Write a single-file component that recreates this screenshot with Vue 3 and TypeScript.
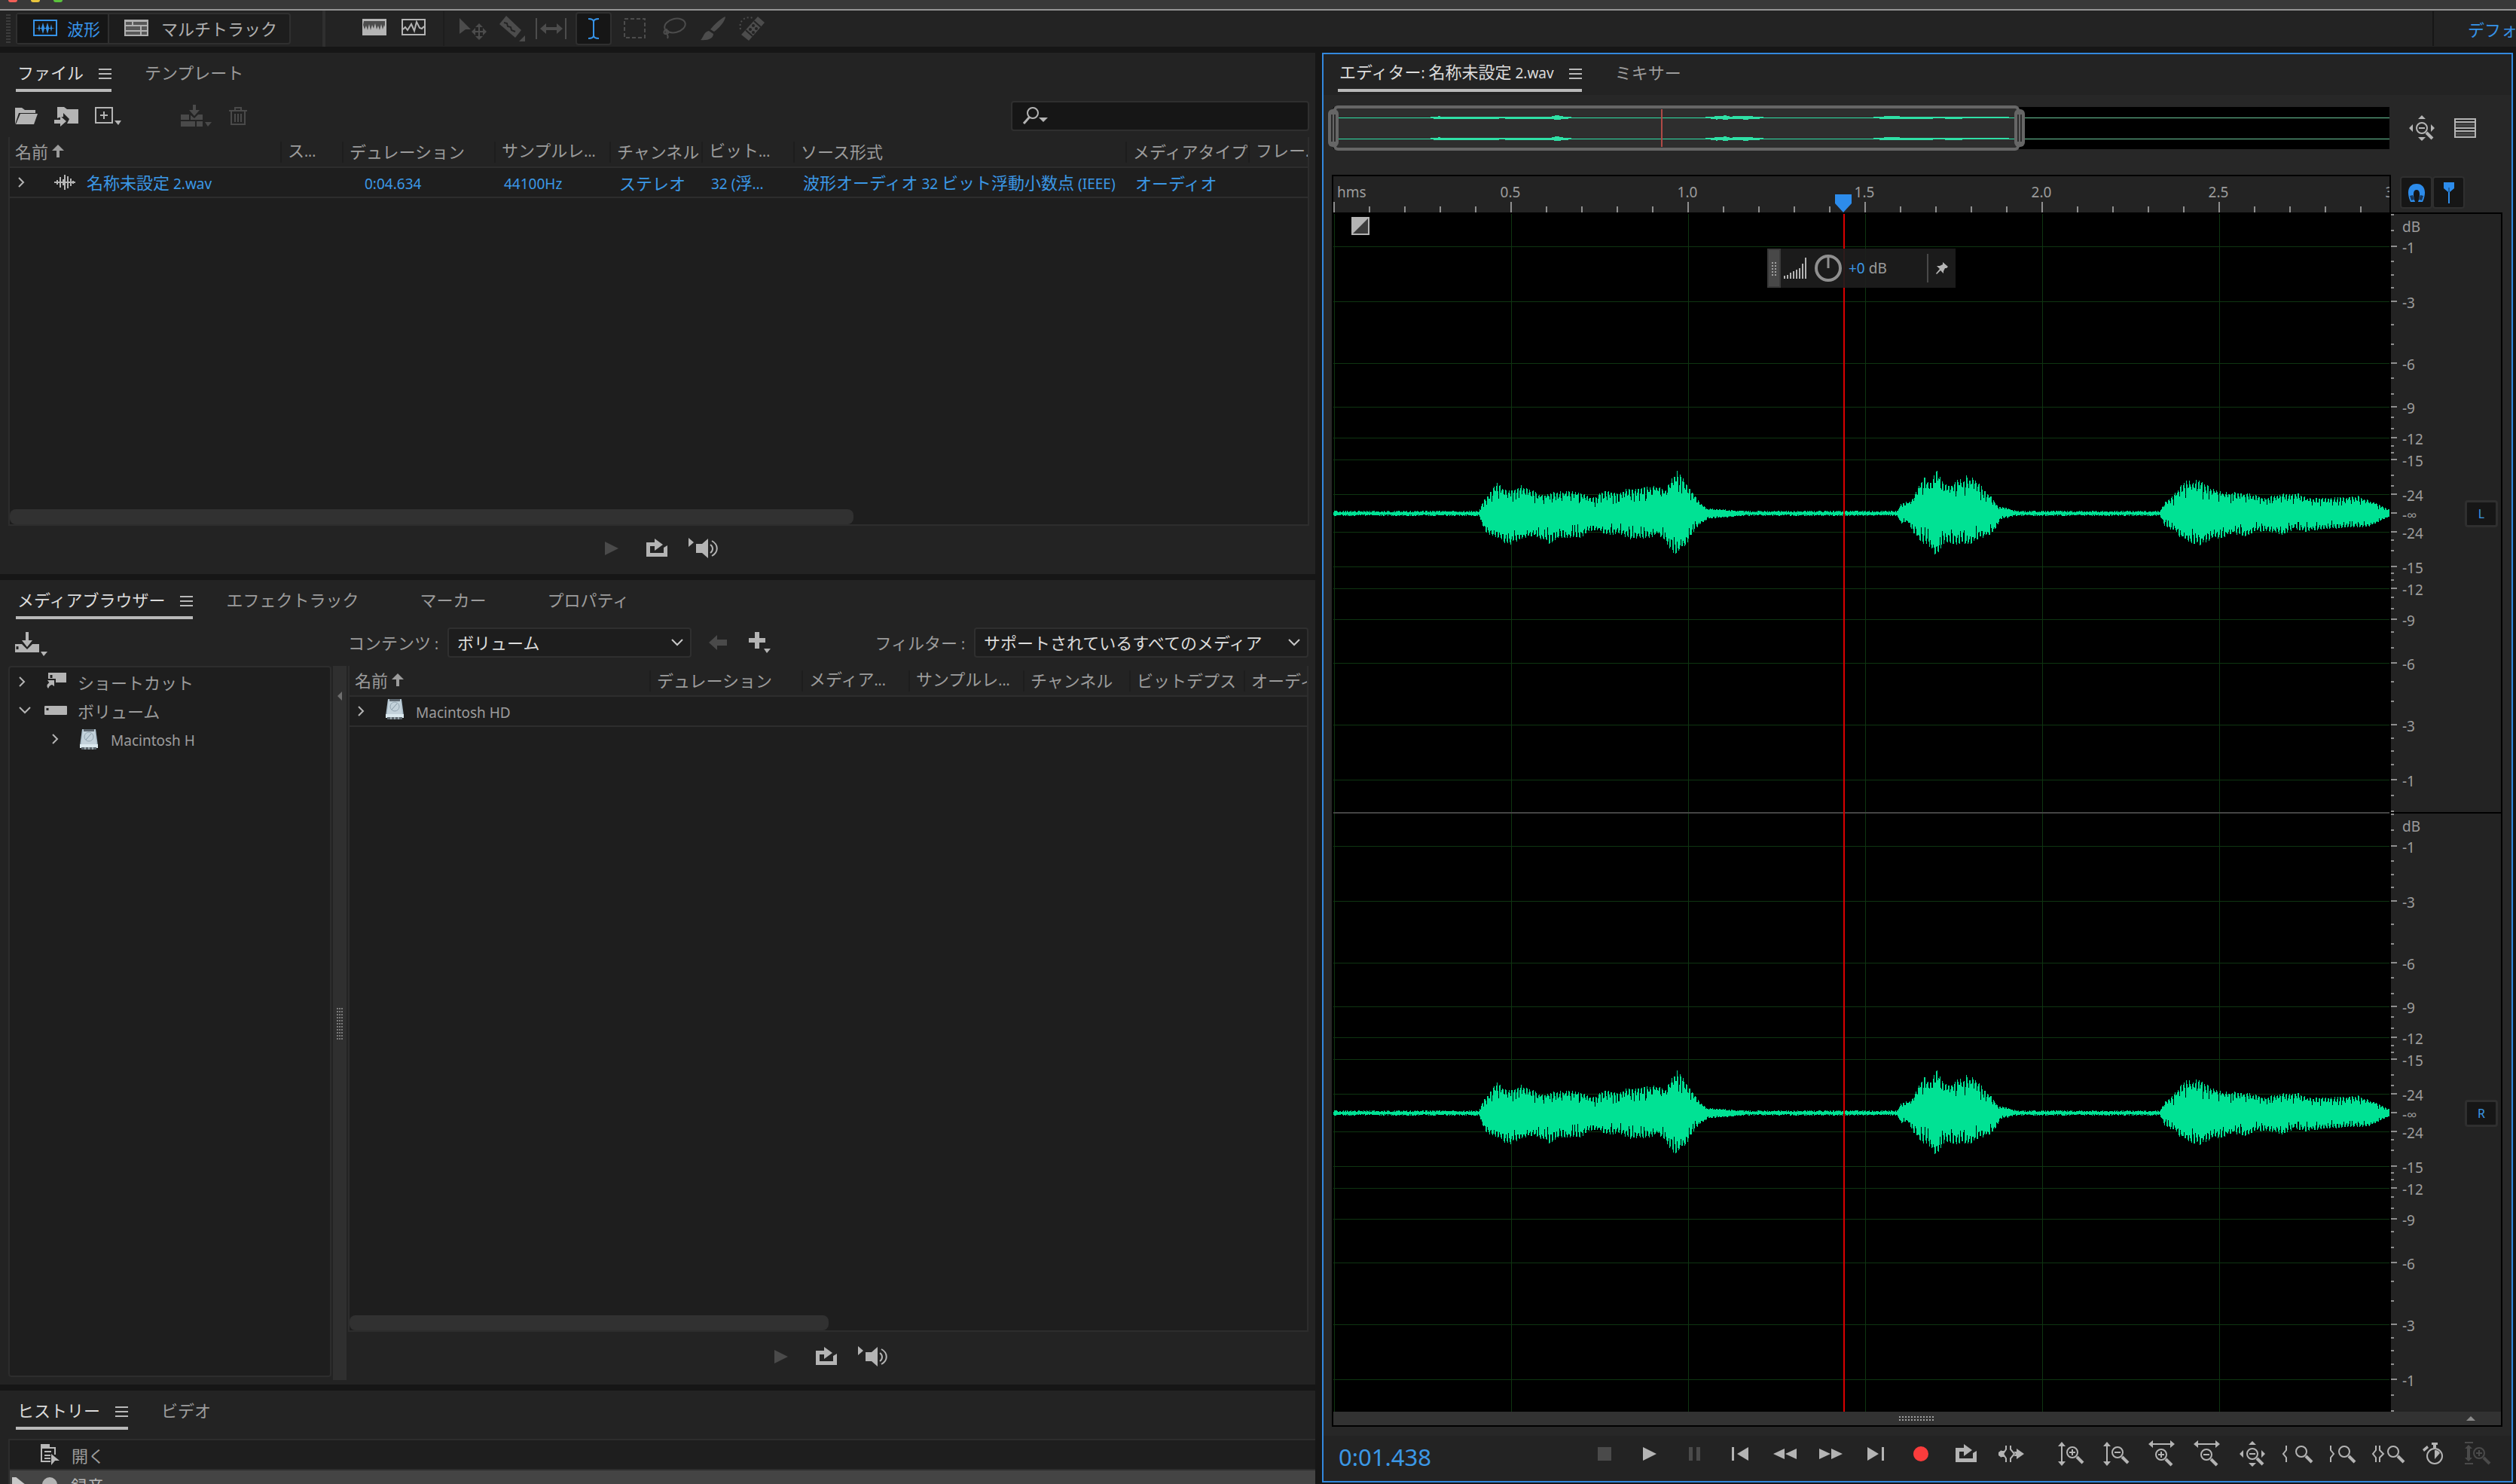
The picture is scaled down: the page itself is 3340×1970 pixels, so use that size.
<script setup lang="ts">
import { h } from 'vue'

/* ---------- text: Latin runs are set in a slightly smaller face than kana/kanji ---------- */
const Txt = (p: { t: string }) =>
  h(
    'span',
    p.t
      .split(/([ -~∞]+)/)
      .filter((s) => s)
      .map((s) => (/^[ -~∞]/.test(s) ? h('span', { class: 'lat' }, s) : s)),
  )
Txt.props = ['t']

/* ---------- icons: [width, height, markup] ---------- */
const lens = (x: number, y: number, sign: string) =>
  `<g fill="none" stroke="currentColor"><circle cx="${x}" cy="${y}" r="7" stroke-width="2"/><path d="M${x + 6} ${y + 6}L${x + 14} ${y + 14}" stroke-width="4"/>` +
  (sign ? `<path d="M${x - 4} ${y}h8${sign === '+' ? `M${x} ${y - 4}v8` : ''}" stroke-width="2"/>` : '') +
  '</g>'
const vArrow = '<path d="M4 0l5 6H5v20h4l-5 6-5-6h4V6h-4z" fill="currentColor"/>'
const hArrow = '<path d="M0 4l6-5v4h23v-4l6 5-6 5V5H6v4z" fill="currentColor"/>'
const fourWay = '<path d="M17 0l5 5H12zM17 34l5-5H12zM0 17l5-5v10zM34 17l-5-5v10z" fill="currentColor"/>'
const loopMark =
  '<path d="M0 4h11V-1l11 8-11 8V9H5v9h18V11l5-3v15H0z" fill="currentColor"/>'
const hdMark =
  '<path d="M4 1h18l3 22H1z" fill="#a9bcc8"/><path d="M5 2h16l2 19H3z" fill="#c3d2db"/><rect x="6" y="1" width="14" height="3" fill="#5d6770"/><circle cx="13" cy="11" r="6" fill="none" stroke="#93a5b1"/><path d="M9 15l7-8" stroke="#8597a4"/><path d="M1 21h24v5H1z" fill="#dbe9ef"/><path d="M3 25h20v3H3z" fill="#5a646b"/><path d="M8 24v4M13 24v4M18 24v4" stroke="#dbe9ef"/>'

const icons: Record<string, [number, number, string]> = {
  waveMode: [32, 22, '<rect x="1" y="1" width="30" height="20" fill="none" stroke="currentColor" stroke-width="2"/><path d="M3 11h4l1-5 1 5h2l2-7 2 7h2l2-7 2 7h2l1-5 1 5h4l-4 1-1 4-1-4h-2l-2 7-2-7h-2l-2 7-2-7H9l-1 4-1-4z" fill="currentColor"/>'],
  multiMode: [32, 22, '<rect width="32" height="22" fill="currentColor"/><path d="M2 3h8v4H2zM12 3h18v4H12zM2 9h19v5H2zM23 9h7v5h-7zM2 16h19v4H2zM23 16h7v4h-7z" fill="#585858"/>'],
  spectral: [32, 22, '<rect width="32" height="22" fill="currentColor"/><path d="M2 3h28v8l-1-3-2 6-2-7-2 8-2-6-2 5-2-8-2 7-2-5-2 7-2-8-2 8-2-6-2 5-2-6z" fill="#4c4c4c"/>'],
  pitch: [32, 22, '<rect x="1" y="1" width="30" height="20" fill="none" stroke="currentColor" stroke-width="2"/><path d="M2 14l3-3 3 4 5-8 4 9 3-12 4 8 3 1 3-3" fill="none" stroke="currentColor" stroke-width="2"/>'],
  move: [36, 28, '<path d="M0 0l15 15H8l-8 6zM26 7l5 5h-4v5h4v-4l5 5-5 5v-4h-4v5h4l-5 5-5-5h4v-5h-4v4l-5-5 5-5v4h4v-5h-4z" fill="currentColor"/>'],
  razor: [38, 34, '<path d="M11 0L31 19 23 29 2 11z" fill="currentColor"/><path d="M8 9l4 1 1 4 4 1 1 4 5 2" fill="none" stroke="#232323" stroke-width="2"/><path d="M36 26v8h-8z" fill="currentColor"/>'],
  slip: [42, 28, '<path d="M1 0v28M40 0v28" stroke="currentColor" stroke-width="2"/><path d="M6 14l8-7v5h14V7l8 7-8 7v-5H14v5z" fill="currentColor"/>'],
  ibeam: [16, 28, '<path d="M1 1c5 0 7 2 7 4 0-2 2-4 7-4M8 4v20M1 27c5 0 7-2 7-4 0 2 2 4 7 4" fill="none" stroke="currentColor" stroke-width="2"/>'],
  marquee: [30, 28, '<rect x="1" y="1" width="27" height="25" fill="none" stroke="currentColor" stroke-width="2" stroke-dasharray="5 3"/>'],
  lasso: [34, 30, '<ellipse cx="18" cy="11" rx="14" ry="9" fill="none" stroke="currentColor" stroke-width="2" transform="rotate(-14 18 11)"/><path d="M8 16c-6 1-6 7-1 6 4-1 2-6 0-4-3 3 4 5 1 10" fill="none" stroke="currentColor" stroke-width="2"/>'],
  brush: [34, 32, '<path d="M33 0c0 6-9 16-15 20l-5-3C18 11 27 2 33 0zM11 19l6 4c0 6-7 9-17 8 4-3 4-11 11-12z" fill="currentColor"/>'],
  heal: [34, 32, '<path d="M24 0l9 8L12 32 2 24z" fill="currentColor"/><path d="M19 6l9 8M8 18l9 8" stroke="#232323" stroke-width="2"/><g fill="#232323"><circle cx="18" cy="12" r="2"/><circle cx="22" cy="16" r="2"/><circle cx="14" cy="17" r="2"/><circle cx="18" cy="21" r="2"/></g><path d="M1 17C-2 4 9-1 18 2" fill="none" stroke="currentColor" stroke-width="2" stroke-dasharray="2 3"/>'],
  folder: [30, 24, '<path d="M0 1h9l4 3h14v4H5L0 23z" fill="currentColor"/><path d="M7 9h23l-5 14H1z" fill="currentColor"/>'],
  folderIn: [32, 26, '<path d="M4 1h9l4 3h15v19H17l3-6-8-8v5c-3 0-6 1-8 2z" fill="currentColor"/><path d="M8 13l8 7-8 7v-4H0v-5h8z" fill="currentColor"/>'],
  newFile: [36, 24, '<rect x="1" y="1" width="22" height="20" fill="none" stroke="currentColor" stroke-width="2"/><path d="M12 6v10M7 11h10" stroke="currentColor" stroke-width="2"/><path d="M26 18h9l-4 6z" fill="currentColor"/>'],
  insert: [42, 30, '<path d="M0 13h12l6 5 5-5h6v16H0zM16 0h4v7h5l-7 8-7-8h5z" fill="currentColor"/><path d="M0 21h29M12 13v8M20 21v8" stroke="#232323" stroke-width="2"/><path d="M32 23h9l-5 6z" fill="currentColor"/>'],
  trash: [24, 24, '<path d="M0 5h24M8 4V1h8v3M3 6v17h18V6M8 9v11M12 9v11M16 9v11" fill="none" stroke="currentColor" stroke-width="2"/>'],
  search: [34, 24, '<circle cx="13" cy="8" r="7" fill="none" stroke="currentColor" stroke-width="2"/><path d="M9 13L1 22" stroke="currentColor" stroke-width="3"/><path d="M21 14h12l-6 6z" fill="currentColor"/>'],
  up: [16, 18, '<path d="M8 0l8 8h-6v9H6V8H0z" fill="currentColor"/>'],
  right: [8, 14, '<path d="M1 1l6 6-6 6" fill="none" stroke="currentColor" stroke-width="2"/>'],
  down: [16, 10, '<path d="M1 1l7 7 7-7" fill="none" stroke="currentColor" stroke-width="2"/>'],
  clip: [28, 22, '<path d="M0 11h28M4 8v6M8 4v14M12 7v8M14 1v20M18 3v16M22 6v10M25 9v4" fill="none" stroke="currentColor" stroke-width="2"/>'],
  play: [20, 20, '<path d="M1 1l18 9-18 9z" fill="currentColor"/>'],
  loop: [28, 24, loopMark],
  speaker: [40, 28, '<path d="M0 0l7 6-7 6zM10 8h8l8-7v26l-8-7h-8z" fill="currentColor"/><path d="M29 9c4 3 4 8 0 11M31 4c9 5 9 15 0 20" fill="none" stroke="currentColor" stroke-width="2"/>'],
  ingest: [44, 32, '<path d="M0 16h9l7 7 7-7h9v11H0zM14 0h4v11h5l-7 9-7-9h5z" fill="currentColor"/><path d="M3 19v4" stroke="#232323" stroke-width="3"/><path d="M34 26h9l-5 6z" fill="currentColor"/>'],
  back: [24, 20, '<path d="M0 10L11 0v6h13v8H11v6z" fill="currentColor"/>'],
  plus: [30, 28, '<path d="M8 0h6v8h8v6h-8v8H8v-8H0V8h8zM20 22h9l-5 6z" fill="currentColor"/>'],
  shortcut: [28, 24, '<path d="M4 0h24v13H4z" fill="currentColor"/><path d="M8 3v4" stroke="#1e1e1e" stroke-width="3"/><path d="M1 9h12v11l-4-3c-3 1-4 3-4 6-4-2-5-7-1-10z" fill="currentColor" stroke="#1e1e1e" stroke-width="2"/>'],
  drive: [30, 12, '<rect width="30" height="12" rx="1" fill="currentColor"/><path d="M4 3v3" stroke="#1e1e1e" stroke-width="3"/>'],
  hd: [26, 28, hdMark],
  opened: [26, 28, '<path d="M1 5h18v9M1 5v18h12" fill="none" stroke="currentColor" stroke-width="2"/><path d="M0 0h12v5H0zM5 9h9v2H5zM5 14h8v2H5zM5 18h8v2H5zM14 13l11 9h-6l-5 6z" fill="currentColor"/>'],
  stop: [18, 18, '<rect width="18" height="18" fill="currentColor"/>'],
  pause: [18, 18, '<path d="M1 0h5v18H1zM11 0h5v18h-5z" fill="currentColor"/>'],
  prev: [22, 18, '<path d="M0 0h3v18H0zM22 0v18L7 9z" fill="currentColor"/>'],
  rew: [32, 14, '<path d="M15 0v14L0 7zM31 0v14L16 7z" fill="currentColor"/>'],
  fwd: [32, 14, '<path d="M1 0v14l15-7zM17 0v14l15-7z" fill="currentColor"/>'],
  next: [22, 18, '<path d="M19 0h3v18h-3zM0 0v18l15-9z" fill="currentColor"/>'],
  record: [20, 20, '<circle cx="10" cy="10" r="10" fill="#fa3c3c"/>'],
  skip: [34, 22, '<path d="M24 4l10 7-10 7v-4h-4l3-3-3-3h4zM4 7l5 0-2 4 2 4H4v1l-4-3V9l4-3z" fill="currentColor"/><path d="M10 0v5l-4 6 4 6v5M16 0v5l5 6-5 6v5" fill="none" stroke="currentColor" stroke-width="2"/>'],
  vIn: [34, 32, vArrow + lens(18, 14, '+')],
  vOut: [34, 32, vArrow + lens(18, 14, '-')],
  hIn: [36, 34, hArrow + lens(17, 18, '+')],
  hOut: [36, 34, hArrow + lens(17, 18, '-')],
  full: [34, 34, fourWay + lens(17, 17, '-')],
  zLeft: [42, 26, '<path d="M6 2v6l-4 5 4 5v6" fill="none" stroke="currentColor" stroke-width="2"/>' + lens(26, 10, '')],
  zRight: [36, 26, '<path d="M2 2v6l4 5-4 5v6" fill="none" stroke="currentColor" stroke-width="2"/>' + lens(20, 10, '')],
  zSel: [44, 26, '<path d="M6 2v6l-4 5 4 5v6M11 2v6l5 5-5 5v6" fill="none" stroke="currentColor" stroke-width="2"/>' + lens(29, 10, '')],
  watch: [28, 30, '<circle cx="16" cy="18" r="10" fill="none" stroke="currentColor" stroke-width="2"/><path d="M12 0h8v3h-2v4h-4V3h-2zM0 9l6-5 2 3-6 5zM16 10c4 0 6 2 7 4l-7 8z" fill="currentColor"/>'],
  track: [36, 32, '<path d="M0 1h11M0 29h11" stroke="currentColor" stroke-width="2"/><path d="M5 4l5 5H7v12h3l-5 5-5-5h3V9H0z" fill="currentColor"/>' + lens(19, 15, '+')],
  rows: [30, 26, '<rect x="1" y="1" width="27" height="24" fill="none" stroke="currentColor" stroke-width="2"/><path d="M1 5h27M1 13h27M1 17h27" stroke="currentColor" stroke-width="2"/><path d="M2 7h25v4H2zM2 19h25v4H2z" fill="#444"/>'],
  magnet: [24, 26, '<path d="M4 25C-2 12 1 1 12 1s14 11 8 24h-6c3-8 3-16-2-16s-5 8-2 16z" fill="currentColor"/><path d="M3 17l4-1 2 6-4 1zM21 17l-4-1-2 6 4 1z" fill="#17375c"/>'],
  marker: [14, 28, '<path d="M0 0h14v8l-6 5v15H6V13L0 8z" fill="currentColor"/><path d="M7 7v6" stroke="#17375c"/>'],
  pin: [16, 16, '<path d="M9 0l7 6-2 2h-2l-2 4v3L6 11 1 16 0 15l5-6-4-4 4 0 4-2z" fill="currentColor"/>'],
  fade: [24, 24, '<rect width="24" height="24" fill="#b4b4b4"/><path d="M2 22L22 2v20z" fill="#3c3c3c"/>'],
}
const Icon = (p: { n: string }) => {
  const [w, ht, body] = icons[p.n]
  return h('svg', { width: w, height: ht, viewBox: `0 0 ${w} ${ht}`, class: ['icon', `i-${p.n}`], 'aria-hidden': 'true', innerHTML: body })
}
Icon.props = ['n']

/* ---------- panels ---------- */
const tools = ['move', 'razor', 'slip', 'ibeam', 'marquee', 'lasso', 'brush', 'heal']
const fileCols = ['名前', 'ス...', 'デュレーション', 'サンプルレ...', 'チャンネル', 'ビット...', 'ソース形式', 'メディアタイプ', 'フレー..']
const fileRow = ['', '0:04.634', '44100Hz', 'ステレオ', '32 (浮...', '波形オーディオ 32 ビット浮動小数点 (IEEE)', 'オーディオ', '']
const mediaCols = ['名前', 'デュレーション', 'メディア...', 'サンプルレ...', 'チャンネル', 'ビットデプス', 'オーディ']
const transport = ['stop', 'play', 'pause', 'prev', 'rew', 'fwd', 'next', 'record', 'loop', 'skip']
const zooms = ['vIn', 'vOut', 'hIn', 'hOut', 'full', 'zLeft', 'zRight', 'zSel', 'watch', 'track']
const dimmed = ['stop', 'pause', 'track']

/* ---------- timeline ---------- */
const W = 1402
const H = 794
const perSec = 470
const pct = (v: number, total: number) => `${(v / total) * 100}%`
const majors = [0.5, 1, 1.5, 2, 2.5, 3]
const rulerTicks = Array.from({ length: 30 }, (_, i) => `M${Math.round(i * perSec / 10) + 1} ${i % 5 ? 40 : 34}V48`).join('')
const headX = 677

/* ---------- amplitude scale ---------- */
const mid = H / 2
const amp = (db: number) => Math.round(mid * Math.pow(10, db / 20))
const dbs = [-1, -3, -6, -9, -12, -15, -24]
const labels = [
  { y: 17, t: 'dB' },
  ...dbs.map((d) => ({ y: mid - amp(d) + 2, t: String(d) })),
  { y: mid + 3, t: '-∞' },
  ...dbs.map((d) => ({ y: mid + amp(d) + 2, t: String(d) })),
]
const minor = [396, 375, 334, 316, 299, 250, 224, 179, 158, 127, 112, 89, 80, 50, 36]
const majorTicks = [0, ...dbs.map(amp)].map((a) => `M0 ${mid - a}h8M0 ${mid + a}h8`).join('')
const minorTicks = minor.map((a) => `M0 ${mid - a}h4M0 ${mid + a}h4`).join('')
const gridLines =
  dbs.map((d) => `M0 ${mid - amp(d)}H${W}M0 ${mid + amp(d)}H${W}`).join('') +
  [0, 0.5, 1, 1.5, 2, 2.5].map((t) => `M${Math.round(t * perSec) + 1} 0V${H}`).join('')

/* ---------- waveform envelope, [x, height] pairs ---------- */
const upper = [0, 2, 193, 2, 199, 18, 207, 27, 215, 42, 223, 37, 232, 30, 247, 38, 261, 33, 277, 24, 293, 28, 315, 30, 334, 26, 347, 20, 355, 31, 373, 27, 389, 32, 430, 37, 440, 31, 448, 45, 456, 57, 465, 47, 475, 30, 487, 14, 497, 5, 532, 3, 545, 2, 748, 2, 753, 12, 768, 18, 783, 50, 790, 40, 801, 58, 810, 39, 825, 42, 840, 50, 851, 47, 861, 35, 873, 22, 883, 8, 892, 8, 902, 3, 915, 2, 1097, 2, 1104, 16, 1115, 24, 1127, 42, 1140, 44, 1149, 46, 1161, 37, 1176, 29, 1196, 28, 1217, 26, 1237, 21, 1258, 26, 1279, 27, 1293, 20, 1334, 21, 1360, 23, 1380, 15, 1395, 8, 1402, 3]
const lower = [0, 2, 193, 2, 200, 22, 207, 30, 218, 33, 232, 44, 247, 35, 265, 30, 280, 38, 290, 42, 300, 33, 325, 34, 340, 24, 352, 22, 358, 28, 380, 28, 393, 35, 415, 34, 430, 29, 440, 37, 445, 48, 455, 56, 467, 45, 480, 20, 497, 7, 545, 2, 748, 2, 753, 14, 762, 11, 770, 26, 780, 40, 790, 42, 797, 57, 803, 51, 812, 39, 822, 43, 845, 41, 860, 33, 875, 27, 885, 8, 905, 2, 1097, 2, 1104, 18, 1116, 23, 1125, 34, 1140, 42, 1150, 42, 1165, 35, 1175, 34, 1195, 27, 1210, 31, 1225, 24, 1240, 24, 1260, 29, 1275, 21, 1290, 24, 1310, 22, 1345, 19, 1375, 18, 1390, 10, 1402, 3]
const at = (env: number[], x: number) => {
  let i = 0
  while (i < env.length - 4 && env[i + 2] < x) i += 2
  const k = Math.max(0, Math.min(1, (x - env[i]) / (env[i + 2] - env[i])))
  return env[i + 1] + k * (env[i + 3] - env[i + 1])
}
let seed = 41
const rnd = () => (seed = (seed * 16807) % 2147483647) / 2147483647
const height = (env: number[], x: number, phase: number) => {
  const e = at(env, x)
  if (e <= 5) return Math.round(e - 1 + rnd() * 2)
  const peak = (x + phase) % 4 < 2
  return Math.round(e * (peak ? 0.86 + rnd() * 0.14 : rnd() < 0.25 ? 0.42 + rnd() * 0.3 : 0.66 + rnd() * 0.2))
}
const wave = Array.from({ length: W }, (_, x) => `M${x} ${mid - height(upper, x, 0)}h1V${mid + 1 + height(lower, x, 2)}h-1z`).join('')
/* the overview fits the whole clip, so the visible part is drawn at 65 % */
const overview = [16, 44]
  .map((c) => Array.from({ length: 910 }, (_, x) => {
    const a = at(upper, x * 1.54)
    const up = a > 52 ? 3 : a > 40 ? 2 : a > 15 ? 1 : 0
    const down = a > 48 ? 2 : a > 24 ? 1 : 0
    return `M${x} ${c - up}h1v${1 + up + down}h-1z`
  }).join(''))
  .join('')
const overviewTail = 'M910 16h492v1h-492zM910 44h492v1h-492z'
</script>

<template>
  <div class="app">
    <header class="titlebar"><i class="red"></i><i class="yellow"></i><i class="green"></i></header>

    <nav class="toolbar">
      <span class="grip"></span>
      <div class="modes">
        <button class="on"><Icon n="waveMode" /><Txt t="波形" /></button>
        <button><Icon n="multiMode" /><Txt t="マルチトラック" /></button>
      </div>
      <span class="bar"></span>
      <div class="views">
        <button aria-label="スペクトル"><Icon n="spectral" /></button>
        <button aria-label="ピッチ"><Icon n="pitch" /></button>
      </div>
      <div class="tools">
        <button v-for="t in tools" :key="t" :class="{ sel: t === 'ibeam' }" :aria-label="t"><Icon :n="t" /></button>
      </div>
      <a class="workspace" href="#"><Txt t="デフォ" /></a>
    </nav>

    <main class="work">
      <div class="left">
        <section class="panel">
          <div class="tabs">
            <button class="tab active"><Txt t="ファイル" /><i class="menu"></i></button>
            <button class="tab"><Txt t="テンプレート" /><i class="menu"></i></button>
          </div>
          <div class="fileTools">
            <button aria-label="開く"><Icon n="folder" /></button>
            <button aria-label="読み込み"><Icon n="folderIn" /></button>
            <button aria-label="新規"><Icon n="newFile" /></button>
            <button class="off far" aria-label="挿入"><Icon n="insert" /></button>
            <button class="off" aria-label="削除"><Icon n="trash" /></button>
            <label class="search"><Icon n="search" /><input type="text" aria-label="検索" /></label>
          </div>
          <div class="list files">
            <table>
              <thead>
                <tr><th v-for="(c, i) in fileCols" :key="c"><Txt :t="c" /><Icon v-if="!i" n="up" /></th></tr>
              </thead>
              <tbody>
                <tr class="blue">
                  <td><span class="name"><Icon n="right" /><Icon n="clip" /><Txt t="名称未設定 2.wav" /></span></td>
                  <td v-for="(c, i) in fileRow" :key="i"><Txt :t="c" /></td>
                </tr>
              </tbody>
            </table>
            <span class="thumb"></span>
          </div>
          <div class="preview">
            <button class="off" aria-label="再生"><Icon n="play" /></button>
            <button aria-label="ループ"><Icon n="loop" /></button>
            <button aria-label="自動再生"><Icon n="speaker" /></button>
          </div>
        </section>

        <section class="panel">
          <div class="tabs">
            <button class="tab active"><Txt t="メディアブラウザー" /><i class="menu"></i></button>
            <button class="tab"><Txt t="エフェクトラック" /><i class="menu"></i></button>
            <button class="tab"><Txt t="マーカー" /><i class="menu"></i></button>
            <button class="tab"><Txt t="プロパティ" /><i class="menu"></i></button>
          </div>
          <div class="mediaTools">
            <div><button aria-label="取り込み"><Icon n="ingest" /></button></div>
            <div class="filters">
              <label for="contents"><Txt t="コンテンツ :" /></label>
              <span class="pick contents"><select id="contents"><option>ボリューム</option></select><Icon n="down" /></span>
              <button class="off" aria-label="戻る"><Icon n="back" /></button>
              <button aria-label="追加"><Icon n="plus" /></button>
              <label class="push" for="filter"><Txt t="フィルター :" /></label>
              <span class="pick filter"><select id="filter"><option>サポートされているすべてのメディア</option></select><Icon n="down" /></span>
            </div>
          </div>
          <div class="browser">
            <ul class="tree">
              <li><Icon n="right" /><Icon n="shortcut" /><Txt t="ショートカット" /></li>
              <li><Icon n="down" /><Icon n="drive" /><Txt t="ボリューム" /></li>
              <li class="child"><Icon n="right" /><Icon n="hd" /><Txt t="Macintosh H" /></li>
            </ul>
            <div class="splitter"><i class="fold"></i><i class="dots"></i></div>
            <div class="results">
              <div class="list media">
                <table>
                  <thead>
                    <tr><th v-for="(c, i) in mediaCols" :key="c"><Txt :t="c" /><Icon v-if="!i" n="up" /></th></tr>
                  </thead>
                  <tbody>
                    <tr><td colspan="7"><span class="name"><Icon n="right" /><Icon n="hd" /><Txt t="Macintosh HD" /></span></td></tr>
                  </tbody>
                </table>
                <span class="thumb"></span>
              </div>
              <div class="preview">
                <button class="off" aria-label="再生"><Icon n="play" /></button>
                <button aria-label="ループ"><Icon n="loop" /></button>
                <button aria-label="自動再生"><Icon n="speaker" /></button>
              </div>
            </div>
          </div>
        </section>

        <section class="panel history">
          <div class="tabs">
            <button class="tab active"><Txt t="ヒストリー" /><i class="menu"></i></button>
            <button class="tab"><Txt t="ビデオ" /><i class="menu"></i></button>
          </div>
          <ul class="steps">
            <li><Icon n="opened" /><Txt t="開く" /></li>
            <li class="now"><i class="at"></i><i class="dot"></i><Txt t="録音" /></li>
          </ul>
        </section>
      </div>

      <section class="editor">
        <div class="tabs">
          <button class="tab active"><Txt t="エディター: 名称未設定 2.wav" /><i class="menu"></i></button>
          <button class="tab"><Txt t="ミキサー" /><i class="menu"></i></button>
        </div>
        <div class="stage">
          <div class="row">
            <div class="overview">
              <span class="range"></span>
              <svg :viewBox="`0 0 ${W} 60`" preserveAspectRatio="none" shape-rendering="crispEdges">
                <path :d="overview" fill="#2fe0a6" />
                <path :d="overviewTail" fill="#6cc79b" />
                <path d="M436 5V55" stroke="#b04a46" stroke-width="2" />
              </svg>
              <i class="handle"></i><i class="handle end"></i>
            </div>
            <div class="side">
              <button aria-label="全体表示"><Icon n="full" /></button>
              <button aria-label="表示"><Icon n="rows" /></button>
            </div>
          </div>
          <div class="row ruled">
            <div class="ruler">
              <svg :viewBox="`0 0 ${W} 48`" preserveAspectRatio="none" shape-rendering="crispEdges"><path :d="rulerTicks" stroke="#8f8f8f" stroke-width="2" /></svg>
              <span class="unit lat">hms</span>
              <span v-for="m in majors" :key="m" class="sec lat" :style="{ left: pct(m * perSec, W) }">{{ m.toFixed(1) }}</span>
              <i class="head" :style="{ left: pct(headX, W) }"></i>
            </div>
            <div class="snap">
              <button aria-label="スナップ"><Icon n="magnet" /></button>
              <button aria-label="マーカー"><Icon n="marker" /></button>
            </div>
          </div>
          <div class="canvas">
            <div class="waves">
              <svg v-for="c in 2" :key="c" :viewBox="`0 0 ${W} ${H}`" preserveAspectRatio="none" shape-rendering="crispEdges">
                <path :d="gridLines" stroke="#0e3511" stroke-width="1" />
                <path :d="wave" fill="#00e294" />
              </svg>
              <i class="cursor" :style="{ left: pct(headX, W) }"></i>
              <Icon n="fade" class="fade" />
              <div class="hud" :style="{ left: pct(578, 1406) }">
                <i class="hudGrip"></i>
                <svg width="32" height="30" viewBox="0 0 32 30" shape-rendering="crispEdges"><path d="M1 25v4M5 24v5M9 21v8M13 19v10M17 17v12M21 15v14M25 9v20M29 1v28" stroke="#b4b4b4" stroke-width="2" /></svg>
                <svg class="knob" width="36" height="36" viewBox="0 0 36 36"><circle cx="18" cy="18" r="16" fill="none" stroke="#8f8f8f" stroke-width="4" /><path d="M18 2v16" stroke="#8f8f8f" stroke-width="3" /></svg>
                <span class="lat"><b>+0</b> dB</span>
                <button aria-label="固定"><Icon n="pin" /></button>
              </div>
            </div>
            <div class="scale">
              <div v-for="c in ['L', 'R']" :key="c" class="chan">
                <svg :viewBox="`0 0 8 ${H}`" preserveAspectRatio="none" shape-rendering="crispEdges"><path :d="majorTicks + minorTicks" stroke="#8f8f8f" stroke-width="2" /></svg>
                <span v-for="(l, i) in labels" :key="i" class="lat" :style="{ top: pct(l.y, H) }">{{ l.t }}</span>
                <button>{{ c }}</button>
              </div>
            </div>
          </div>
          <div class="hscroll"><i class="hdots"></i><i class="tri"></i></div>
        </div>
        <footer class="transport">
          <output class="lat">0:01.438</output>
          <div class="cells">
            <button v-for="t in transport" :key="t" :class="{ off: dimmed.includes(t) }" :aria-label="t"><Icon :n="t" /></button>
          </div>
          <div class="cells">
            <button v-for="t in zooms" :key="t" :class="{ off: dimmed.includes(t) }" :aria-label="t"><Icon :n="t" /></button>
          </div>
        </footer>
      </section>
    </main>
  </div>
</template>

<style>
body {
  margin: 0;
  background: #161616;
  overflow: hidden;
}
.lat {
  font-family: 'Noto Sans', 'Open Sans', sans-serif;
  font-size: 19px;
}
.icon {
  display: block;
  flex: none;
  overflow: visible;
}
</style>

<style scoped>
.app {
  height: 100vh;
  display: flex;
  flex-direction: column;
  font: 22px/32px 'Noto Sans CJK JP', sans-serif;
  color: #9c9c9c;
  overflow: hidden;
}
* {
  box-sizing: border-box;
}
button {
  background: none;
  border: 0;
  padding: 0;
  color: #b4b4b4;
  font: inherit;
  display: flex;
  align-items: center;
  justify-content: center;
  white-space: nowrap;
}
ul {
  list-style: none;
  margin: 0;
  padding: 0;
}
.off {
  color: #4a4a4a;
}
.titlebar {
  height: 14px;
  flex: none;
  background: #393939;
  border-bottom: 2px solid #949494;
  display: flex;
  gap: 18px;
  padding-left: 11px;
  overflow: hidden;
}
.titlebar i {
  width: 12px;
  height: 3px;
  border-radius: 0 0 6px 6px;
}
.red { background: #f25f57; }
.yellow { background: #e8c43c; }
.green { background: #5bc33d; }

.toolbar {
  height: 48px;
  flex: none;
  background: #232323;
  display: flex;
  align-items: center;
  overflow: hidden;
}
.grip {
  width: 6px;
  height: 38px;
  margin: 0 7px 0 8px;
  background: repeating-linear-gradient(#3c3c3c 0 2px, transparent 2px 4px);
}
.modes {
  display: flex;
  height: 42px;
  border: 2px solid #2f2f2f;
  border-radius: 4px;
  background: #1d1d1d;
}
.modes button {
  gap: 17px;
  padding: 0 16px 2px 20px;
  color: #b0b0b0;
}
.modes .on {
  color: #3693e8;
  background: #161616;
  border-right: 2px solid #2f2f2f;
  gap: 13px;
  padding: 0 10px 2px 21px;
}
.bar {
  width: 4px;
  height: 48px;
  background: #2f2f2f;
  margin-left: 42px;
}
.views {
  display: flex;
  gap: 20px;
  padding: 0 23px 4px 49px;
  height: 46px;
  border-right: 2px solid #1d1d1d;
}
.tools {
  display: flex;
  padding-left: 12px;
}
.tools button {
  width: 52px;
  height: 44px;
  color: #4c4c4c;
}
.tools .sel {
  width: 48px;
  margin: 0 5px 0 6px;
  color: #3693e8;
  background: #161616;
  border: 2px solid #2f2f2f;
  border-radius: 4px;
}
.workspace {
  margin-left: auto;
  width: 111px;
  line-height: 46px;
  padding-left: 45px;
  border-left: 2px solid #161616;
  color: #3693e8;
  text-decoration: none;
  white-space: nowrap;
  overflow: hidden;
}

.work {
  flex: 1;
  min-height: 0;
  display: grid;
  grid-template-columns: minmax(0, 1746fr) minmax(0, 1581fr);
  gap: 9px;
  padding: 8px 4px 0 0;
}
.left {
  min-height: 0;
  display: grid;
  grid-template-rows: minmax(0, 692fr) minmax(0, 1068fr) minmax(0, 124fr);
  gap: 8px;
}
.panel {
  background: #232323;
  display: flex;
  flex-direction: column;
  overflow: hidden;
}
.tabs {
  height: 52px;
  flex: none;
  display: flex;
  gap: 42px;
  padding: 6px 0 0 21px;
}
.tab {
  gap: 20px;
  padding: 0 0 4px 2px;
  border-bottom: 4px solid transparent;
  color: #9c9c9c;
}
.tab.active {
  color: #dcdcdc;
  border-color: #b9b9b9;
}
.menu {
  width: 17px;
  height: 14px;
  margin-top: 6px;
  visibility: hidden;
  background: linear-gradient(#b9b9b9 0 2px, transparent 2px 6px, #b9b9b9 6px 8px, transparent 8px 12px, #b9b9b9 12px);
}
.active .menu {
  visibility: visible;
}
.fileTools {
  display: flex;
  align-items: center;
  gap: 22px;
  height: 60px;
  flex: none;
  padding: 4px 8px 0 20px;
}
.far {
  margin-left: 56px;
}
.search {
  margin-left: auto;
  width: 396px;
  height: 40px;
  display: flex;
  align-items: center;
  padding-left: 14px;
  color: #b4b4b4;
  background: #161616;
  border: 2px solid #2f2f2f;
  border-radius: 4px;
}
.search input {
  flex: 1;
  min-width: 0;
  border: 0;
  background: none;
}
.list {
  flex: 1;
  min-height: 0;
  position: relative;
  overflow: hidden;
  background: #1e1e1e;
  border: solid #2d2d2d;
  border-width: 0 2px 2px;
}
.files {
  margin: 0 8px 0 11px;
}
table {
  width: 100%;
  table-layout: fixed;
  border-collapse: collapse;
}
th {
  height: 40px;
  padding: 0 0 4px 8px;
  font-weight: 400;
  text-align: left;
  white-space: nowrap;
  overflow: hidden;
  background: linear-gradient(#1d1d1d, #1d1d1d) right / 2px 28px no-repeat #232323;
}
th .icon {
  display: inline-block;
  margin-left: 5px;
}
.files th:nth-child(1) { width: 361px; padding-left: 7px; }
.files th:nth-child(2) { width: 82px; }
.files th:nth-child(3) { width: 202px; }
.files th:nth-child(4) { width: 153px; }
.files th:nth-child(5) { width: 122px; }
.files th:nth-child(6) { width: 122px; }
.files th:nth-child(7) { width: 441px; }
.files th:nth-child(8) { width: 163px; }
.media th:nth-child(1) { width: 400px; padding-left: 7px; }
.media th:nth-child(2) { width: 202px; }
.media th:nth-child(3) { width: 142px; }
.media th:nth-child(4) { width: 152px; }
.media th:nth-child(5) { width: 141px; }
.media th:nth-child(6) { width: 152px; }
th:last-child {
  background: #232323;
}
td {
  height: 40px;
  padding: 0 0 0 11px;
  white-space: nowrap;
  border: solid #2d2d2d;
  border-width: 2px 0;
}
.blue {
  color: #3b98e6;
}
td:nth-child(3) {
  padding-left: 28px;
}
.name {
  display: flex;
  align-items: center;
}
.name .icon {
  color: #b4b4b4;
}
.files .icon + .icon {
  margin: 0 15px 0 40px;
}
.media .icon + .icon {
  margin: 0 15px 6px 28px;
}
.thumb {
  position: absolute;
  left: 0;
  bottom: 0;
  width: 65%;
  height: 20px;
  border-radius: 8px;
  background: #313131;
}
.media .thumb {
  width: 50%;
}
.preview {
  height: 64px;
  flex: none;
  display: flex;
  align-items: center;
  justify-content: center;
  gap: 28px;
  padding: 0 0 5px 9px;
}
.preview button:first-child {
  margin-right: 8px;
}
.results .preview {
  height: 70px;
  padding-left: 6px;
}

.mediaTools,
.browser {
  display: grid;
  grid-template-columns: minmax(0, 429fr) 18px minmax(0, 1275fr);
  gap: 2px;
  padding: 0 9px 0 11px;
}
.mediaTools {
  height: 62px;
  flex: none;
  align-items: center;
}
.mediaTools > div:first-child {
  padding: 4px 0 0 9px;
}
.filters {
  grid-column: 3;
  display: flex;
  align-items: center;
  gap: 12px;
  white-space: nowrap;
}
.filters button {
  margin-left: 11px;
}
.filters .off {
  margin-right: 6px;
}
.push {
  margin-left: auto;
}
.pick {
  position: relative;
  height: 40px;
}
.contents { width: 324px; }
.filter { width: 444px; }
.pick select {
  appearance: none;
  width: 100%;
  height: 100%;
  padding: 0 0 2px 11px;
  font: inherit;
  color: #dcdcdc;
  background: #1d1d1d;
  border: 2px solid #2f2f2f;
  border-radius: 4px;
}
.pick .icon {
  position: absolute;
  right: 11px;
  top: 15px;
  color: #c8c8c8;
}
.browser {
  flex: 1;
  min-height: 0;
}
.tree {
  background: #1e1e1e;
  border: 2px solid #2d2d2d;
  border-radius: 4px;
  margin-bottom: 10px;
}
.tree li {
  display: flex;
  align-items: center;
  height: 38px;
}
.tree .icon {
  color: #b4b4b4;
}
.tree .i-right {
  margin: 0 26px 0 12px;
}
.tree .i-down {
  margin: 0 18px 0 12px;
}
.tree .icon + .icon {
  width: 30px;
  margin-right: 14px;
}
.tree .child {
  padding-left: 44px;
}
.splitter {
  position: relative;
  background: #2f2f2f;
  margin-bottom: 6px;
  display: flex;
  align-items: center;
  justify-content: center;
}
.fold {
  position: absolute;
  top: 34px;
  border: solid transparent;
  border-width: 6px 6px 6px 0;
  border-right-color: #6e6e6e;
}
.dots {
  width: 8px;
  height: 44px;
  background: repeating-linear-gradient(#2f2f2f 0 2px, transparent 2px 4px), repeating-linear-gradient(90deg, #7a7a7a 0 2px, transparent 2px 3px);
}
.results {
  display: flex;
  flex-direction: column;
  min-height: 0;
}
.steps {
  margin: 12px 0 0 11px;
  border: solid #2d2d2d;
  border-width: 2px 0 0 2px;
}
.steps li {
  display: flex;
  align-items: center;
  height: 40px;
  padding-left: 41px;
  gap: 15px;
  background: #1e1e1e;
  border-bottom: 2px solid #2d2d2d;
}
.steps .icon {
  color: #b9b9b9;
}
.steps .now {
  padding-left: 3px;
  background: #444;
  gap: 18px;
  color: #b9b9b9;
}
.at {
  width: 18px;
  height: 20px;
  background: #c8c8c8;
  clip-path: polygon(0 0, 30% 0, 100% 50%, 30% 100%, 0 100%);
}
.dot {
  width: 20px;
  height: 20px;
  margin-left: 4px;
  border-radius: 50%;
  background: #b4b4b4;
}

.editor {
  display: flex;
  flex-direction: column;
  min-height: 0;
  margin-bottom: 2px;
  background: #232323;
  border: 2px solid #3388dd;
}
.editor .tabs {
  height: 50px;
  padding: 4px 0 0 19px;
}
.stage {
  flex: 1;
  min-height: 0;
  display: flex;
  flex-direction: column;
  margin-top: 4px;
  padding: 14px 12px 12px 11px;
  background: #272727;
}
.row {
  display: flex;
  flex: none;
}
.overview {
  flex: 1;
  height: 60px;
  position: relative;
  margin: 0 2px;
  background: linear-gradient(#000, #000) center / 100% 56px no-repeat;
}
.overview svg,
.ruler svg {
  position: absolute;
  inset: 0;
  width: 100%;
  height: 100%;
}
.range {
  position: absolute;
  inset: 0 35% 0 0;
  background: #2e2e2e;
  border: 4px solid #666;
  border-radius: 6px;
}
.handle {
  position: absolute;
  left: -7px;
  top: 5px;
  width: 14px;
  height: 50px;
  border-radius: 6px;
  background: linear-gradient(90deg, #666 4px, #2b2b2b 4px 6px, #666 6px 8px, #2b2b2b 8px 10px, #666 10px) center / 14px 36px no-repeat #666;
}
.end {
  left: calc(65% - 7px);
}
.side {
  width: 148px;
  flex: none;
  display: flex;
  align-items: center;
  gap: 26px;
  padding-left: 24px;
}
.ruled {
  margin-top: 32px;
}
.ruler {
  flex: 1;
  height: 52px;
  border: 2px solid #000;
  position: relative;
  background: #232323;
  overflow: hidden;
}
.ruler .lat {
  position: absolute;
  top: 5px;
}
.unit { left: 5px; }
.sec { transform: translateX(-50%); }
.head {
  position: absolute;
  top: 24px;
  width: 22px;
  height: 24px;
  margin-left: -11px;
  background: #2d8ceb;
  clip-path: polygon(0 0, 100% 0, 100% 50%, 50% 100%, 0 50%);
}
.snap {
  width: 148px;
  flex: none;
  display: flex;
  padding: 2px 0 0 12px;
}
.snap button {
  width: 43px;
  height: 43px;
  color: #2d8ceb;
  background: #161616;
  border: 2px solid #2f2f2f;
  border-radius: 4px;
}
.canvas {
  flex: 1;
  min-height: 0;
  display: flex;
}
.waves {
  flex: 1;
  position: relative;
  display: flex;
  flex-direction: column;
  gap: 2px;
  padding: 0 2px;
  background: #000;
}
.waves > svg:not(.fade) {
  flex: 1;
  min-height: 0;
  width: 100%;
}
.waves > svg + svg:not(.fade) {
  box-shadow: 0 -2px #444;
}
.cursor {
  position: absolute;
  top: 0;
  bottom: 0;
  width: 2px;
  background: #d80000;
}
.fade {
  position: absolute;
  left: 26px;
  top: 4px;
}
.hud {
  position: absolute;
  top: 46px;
  width: 250px;
  height: 52px;
  display: flex;
  align-items: center;
  background: rgba(30, 30, 30, 0.9);
}
.hudGrip {
  width: 18px;
  height: 52px;
  margin-right: 4px;
  border: 2px solid #3a3a3a;
  background: repeating-linear-gradient(#484848 0 2px, transparent 2px 4px) center / 6px 20px no-repeat, linear-gradient(90deg, #a0a0a0 2px, #484848 2px 4px, #a0a0a0 4px) center / 6px 20px no-repeat #484848;
}
.knob {
  margin: 0 9px;
}
.hud b {
  font-weight: 400;
  color: #3b98e6;
}
.hud button {
  margin-left: auto;
  width: 38px;
  height: 38px;
  border-left: 2px solid #484848;
}
.scale {
  width: 150px;
  flex: none;
  margin: -2px 0 0 -2px;
  display: flex;
  flex-direction: column;
  gap: 2px;
  background: #000;
  border: 2px solid #000;
  border-bottom: 0;
}
.scale .chan {
  flex: 1;
  position: relative;
  background: #232323;
}
.chan svg {
  position: absolute;
  width: 8px;
  height: 100%;
}
.chan .lat {
  position: absolute;
  left: 15px;
  transform: translateY(-50%);
}
.chan button {
  position: absolute;
  right: 4px;
  top: calc(50% - 17px);
  width: 44px;
  height: 36px;
  font: 16px 'Noto Sans', sans-serif;
  color: #3b98e6;
  background: #161616;
  border: 3px solid #2f2f2f;
  border-radius: 4px;
}
.hscroll {
  height: 20px;
  flex: none;
  position: relative;
  display: flex;
  align-items: center;
  justify-content: center;
  background: #323232;
  border: solid #000;
  border-width: 0 2px 2px;
}
.hdots {
  width: 48px;
  height: 6px;
  background: linear-gradient(transparent 2px, #323232 2px 4px, transparent 4px), repeating-linear-gradient(90deg, #a0a0a0 0 2px, #323232 2px 4px);
}
.tri {
  position: absolute;
  right: 34px;
  top: 6px;
  border: solid transparent;
  border-width: 0 6px 6px;
  border-bottom-color: #8a8a8a;
}
.transport {
  height: 60px;
  flex: none;
  display: flex;
  align-items: center;
  padding: 0 14px 0 20px;
}
.transport output {
  margin-right: auto;
  font-size: 31px;
  line-height: 40px;
  padding-bottom: 4px;
  color: #3b98e6;
}
.cells {
  display: flex;
  padding-bottom: 13px;
}
.cells + .cells {
  margin-left: 20px;
}
.cells button {
  width: 60px;
  height: 40px;
}
</style>
